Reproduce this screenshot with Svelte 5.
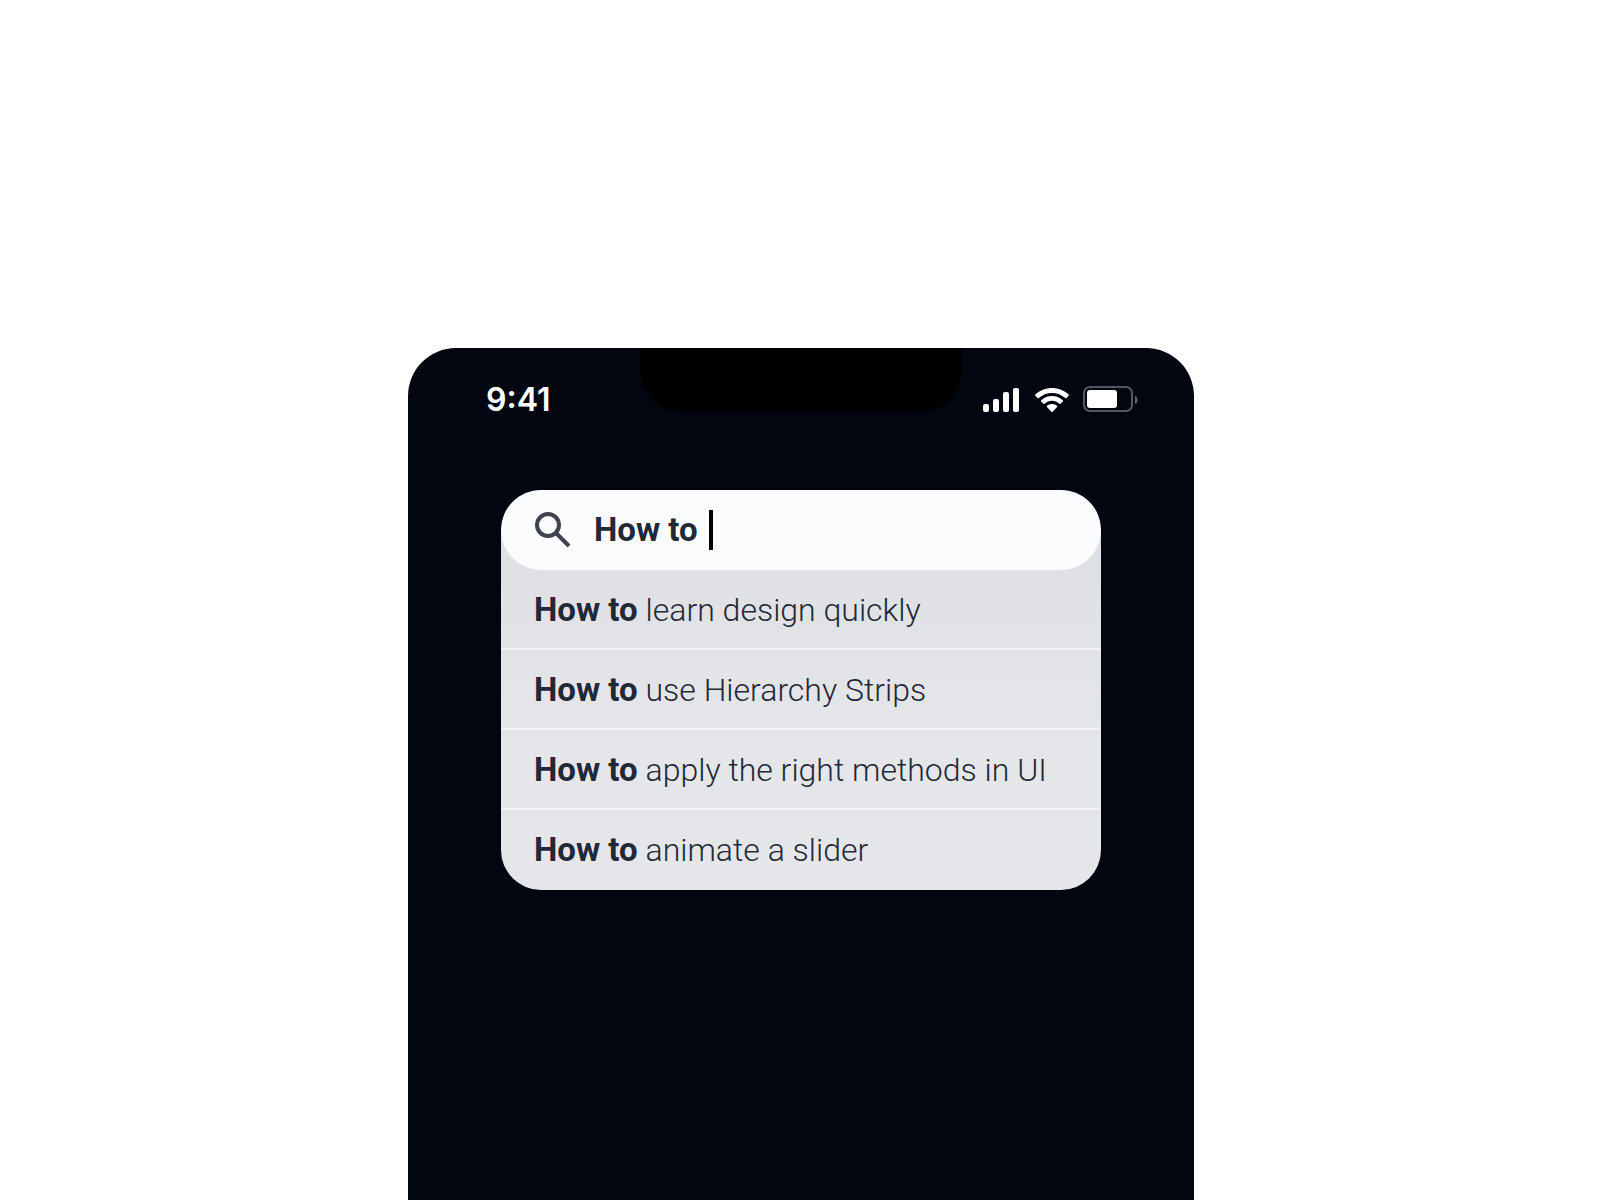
<script>
  let query = $state('How to ');

  const suggestions = [
    'learn design quickly',
    'use Hierarchy Strips',
    'apply the right methods in UI',
    'animate a slider'
  ];
</script>

<main class="stage">
  <section class="phone">
    <header class="status">
      <time class="clock">9:41</time>
      <div class="notch"></div>
      <div class="indicators">
        <svg width="38" height="26" viewBox="0 -1 38 26" role="img" aria-label="Signal">
          <g fill="#fff">
            <rect x="0" y="17" width="6" height="8" rx="2" />
            <rect x="10" y="12" width="6" height="13" rx="2" />
            <rect x="20" y="5" width="6" height="20" rx="2" />
            <rect x="30" y="1" width="6" height="24" rx="2" />
          </g>
        </svg>
        <svg width="34" height="26" viewBox="0 -1 34 26" role="img" aria-label="Wi-Fi">
          <g fill="#fff">
            <path d="M17 1C10.700 1 4.800 3.400.4 7.600c-.4.300-.4.900 0 1.200l2.200 2.300c.3.300.9.300 1.200 0C7.400 7.700 12 5.900 17 5.900s9.600 1.800 13.200 5.200c.3.300.9.300 1.200 0l2.200-2.300c.4-.3.400-.9 0-1.200C29.200 3.400 23.300 1 17 1z" />
            <path d="M17 9c-4.100 0-7.900 1.500-10.800 4.200-.4.300-.4.900 0 1.200l2.200 2.300c.3.300.9.300 1.200 0 2-1.800 4.600-2.900 7.400-2.900s5.400 1.100 7.400 2.900c.3.300.9.300 1.200 0l2.200-2.300c.4-.3.400-.9 0-1.200C24.900 10.500 21.100 9 17 9z" />
            <path d="M17 17c-2 0-3.700.7-5.100 1.900-.4.300-.4.800 0 1.200l4.500 4.600c.3.300.9.300 1.200 0l4.500-4.600c.4-.4.400-.9 0-1.200C20.700 17.700 19 17 17 17z" />
          </g>
        </svg>
        <svg width="56" height="26" viewBox="0 0 56 26" role="img" aria-label="Battery">
          <rect x="1" y="1" width="48" height="24" rx="6" fill="none" stroke="#55575f" stroke-width="2" />
          <rect x="4" y="4" width="30" height="18" rx="3" fill="#fff" />
          <path d="M52 10c1.700.6 2.500 2.100 2.500 4s-.8 3.400-2.500 4z" fill="#62646b" />
        </svg>
      </div>
    </header>

    <div class="panel">
      <label class="search">
        <svg width="36" height="36" viewBox="0 0 36 36" fill="none" stroke="#40424d" stroke-width="4" aria-hidden="true">
          <circle cx="13" cy="13" r="11" />
          <path d="M20.500 20.500 34 34" />
        </svg>
        <span class="entry">
          <input type="text" aria-label="Search" bind:value={query} />
          <span class="caret"></span>
        </span>
      </label>
      <ul class="list">
        {#each suggestions as rest}
          <li>
            <button type="button"><b>How to</b> {rest}</button>
          </li>
        {/each}
      </ul>
    </div>
  </section>
</main>

<style>
  :global(body) {
    background: #fff;
  }

  .stage {
    display: grid;
    grid-template-columns: 408fr 786fr 406fr;
    min-height: 100vh;
    padding-top: 348px;
    box-sizing: border-box;
    font-family: Roboto, sans-serif;
    color: #1f2937;
  }

  .phone {
    grid-column: 2;
    background: #020611;
    border-radius: 48px 48px 0 0;
  }

  .status {
    display: grid;
    grid-template-columns: 1fr 41% 1fr;
    grid-template-rows: 64px;
    color: #fff;
  }

  .clock {
    padding: 33px 0 0 78px;
    font: 600 32px/38px Inter, sans-serif;
  }

  .notch {
    background: #000;
    border-radius: 0 0 42px 42px;
  }

  .indicators {
    display: flex;
    justify-content: flex-end;
    gap: 14px;
    padding: 38px 55px 0 0;
  }

  .panel {
    margin: 78px 93px 0;
    border-radius: 40px;
    overflow: hidden;
    background: linear-gradient(#dddee1, #e5e6ea 60%);
  }

  .search {
    display: flex;
    align-items: center;
    gap: 23px;
    height: 80px;
    padding: 0 34px;
    box-sizing: border-box;
    border-radius: 40px;
    background: #fafcfe;
  }

  .entry {
    display: flex;
    align-items: center;
    gap: 3px;
  }

  input {
    field-sizing: content;
    min-width: 24px;
    padding: 0;
    border: 0;
    outline: 0;
    background: none;
    color: inherit;
    font: 700 33px/40px Roboto, sans-serif;
    caret-color: transparent;
  }

  .caret {
    width: 4px;
    height: 40px;
    background: #000;
  }

  .list {
    margin: 0;
    padding: 0;
    list-style: none;
  }

  li + li {
    box-shadow: 0 -2px #f2f3f6;
  }

  button {
    display: block;
    width: 100%;
    padding: 20px 33px;
    border: 0;
    background: none;
    color: inherit;
    font: 350 32px/40px Roboto, sans-serif;
    text-align: left;
    white-space: nowrap;
  }

  b {
    font-weight: 700;
    font-size: 33px;
    line-height: 1;
  }
</style>
